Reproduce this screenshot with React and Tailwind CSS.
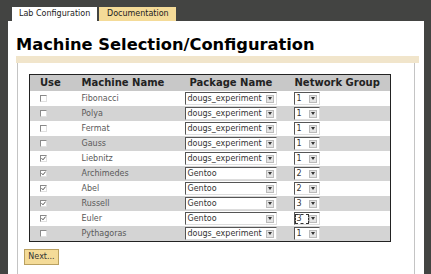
import { useState } from 'react'

const MACHINES = [
  { name: 'Fibonacci', use: false, pkg: 'dougs_experiment', group: '1' },
  { name: 'Polya', use: false, pkg: 'dougs_experiment', group: '1' },
  { name: 'Fermat', use: false, pkg: 'dougs_experiment', group: '1' },
  { name: 'Gauss', use: false, pkg: 'dougs_experiment', group: '1' },
  { name: 'Liebnitz', use: true, pkg: 'dougs_experiment', group: '1' },
  { name: 'Archimedes', use: true, pkg: 'Gentoo', group: '2' },
  { name: 'Abel', use: true, pkg: 'Gentoo', group: '2' },
  { name: 'Russell', use: true, pkg: 'Gentoo', group: '3' },
  { name: 'Euler', use: true, pkg: 'Gentoo', group: '3', focus: true },
  { name: 'Pythagoras', use: false, pkg: 'dougs_experiment', group: '1' },
]

function Check({ checked }) {
  return (
    <span className="flex w-[7px] h-[7px] border-t border-l border-[#8a8a8a] border-r border-b border-r-[#e0e0e0] border-b-[#e0e0e0] bg-white items-center justify-center">
      {checked && (
        <svg width="5" height="5" viewBox="0 0 5 5">
          <path d="M0.5 2.2 L2 3.8 L4.6 0.6" stroke="#555" strokeWidth="1" fill="none" />
        </svg>
      )}
    </span>
  )
}

function Select({ value, width, focus }) {
  return (
    <div
      className={`flex items-center h-[13px] bg-white border-t border-l border-[#555] border-r border-b border-r-[#ddd] border-b-[#ddd] ${width}`}
    >
      <span
        className={`flex-1 min-w-0 pl-[2px] text-[8px] leading-[10px] text-[#333] whitespace-nowrap overflow-hidden ${focus ? 'outline outline-1 outline-dashed outline-[#333] -outline-offset-1' : ''}`}
      >
        {value}
      </span>
      <span className="shrink-0 w-[8px] h-[8px] mr-[2px] bg-[#e4e4e4] border border-[#bbb] flex items-center justify-center">
        <svg width="4" height="3" viewBox="0 0 4 3">
          <path d="M0 0 H4 L2 3 Z" fill="#333" />
        </svg>
      </span>
    </div>
  )
}

export default function App() {
  const [rows] = useState(MACHINES)

  return (
    <div className="w-[431px] h-[274px] overflow-hidden bg-[#434442] flex flex-col font-['DejaVu_Sans',sans-serif]">
      {/* Tabs */}
      <div className="flex gap-[2px] pl-[12px] pt-[7px]">
        <div className="h-[14px] w-[85px] bg-white text-[8px] leading-[14px] pl-[7px] text-[#222]">
          Lab Configuration
        </div>
        <div className="h-[14px] w-[77px] bg-[#f4db98] text-[8px] leading-[14px] pl-[8px] text-[#222]">
          Documentation
        </div>
      </div>

      {/* Panel */}
      <div className="ml-[8px] w-[416px] flex-1 bg-white flex flex-col">
        <h1 className="pl-[8px] pt-[14px] text-[16.3px] leading-[20px] font-bold text-black">
          Machine Selection/Configuration
        </h1>
        <div className="ml-[8px] w-[403px] h-[7px] mt-[1px] bg-[#f1e5cb]" />

        <div className="ml-[9px] w-[398px] flex-1 border-l border-r border-[#c4c4c4] pl-[11px] pt-[11px]">
          <table className="w-[362px] table-fixed border-collapse border border-[#222]">
            <colgroup>
              <col className="w-[42px]" />
              <col className="w-[109px]" />
              <col className="w-[108px]" />
              <col />
            </colgroup>
            <thead>
              <tr className="bg-[#c8c8c8] text-[10px] font-bold text-[#222] text-left">
                <th className="h-[16px] pl-[10px] font-bold leading-[16px]">Use</th>
                <th className="h-[16px] pl-[10px] font-bold leading-[16px]">Machine Name</th>
                <th className="h-[16px] pl-[9px] font-bold leading-[16px]">Package Name</th>
                <th className="h-[16px] pl-[6px] font-bold leading-[16px]">Network Group</th>
              </tr>
            </thead>
            <tbody>
              {rows.map((m, i) => (
                <tr key={m.name} className={i % 2 ? 'bg-[#d4d4d4]' : 'bg-white'}>
                  <td className="p-0">
                    <div className="h-[15px] pl-[10px] flex items-center">
                      <Check checked={m.use} />
                    </div>
                  </td>
                  <td className="p-0">
                    <div className="h-[15px] pl-[10px] flex items-center text-[8px] text-[#5a5a5a]">{m.name}</div>
                  </td>
                  <td className="p-0">
                    <div className="h-[15px] pl-[4px] flex items-center">
                      <Select value={m.pkg} width="w-[92px]" />
                    </div>
                  </td>
                  <td className="p-0">
                    <div className="h-[15px] pl-[5px] flex items-center">
                      <Select value={m.group} width="w-[26px]" focus={m.focus} />
                    </div>
                  </td>
                </tr>
              ))}
            </tbody>
          </table>

          <button className="mt-[7px] -ml-[5px] h-[16px] w-[35px] bg-[#f4db98] border border-[#b9a060] text-[8px] text-[#333] leading-[14px]">
            Next...
          </button>
        </div>
      </div>
    </div>
  )
}
